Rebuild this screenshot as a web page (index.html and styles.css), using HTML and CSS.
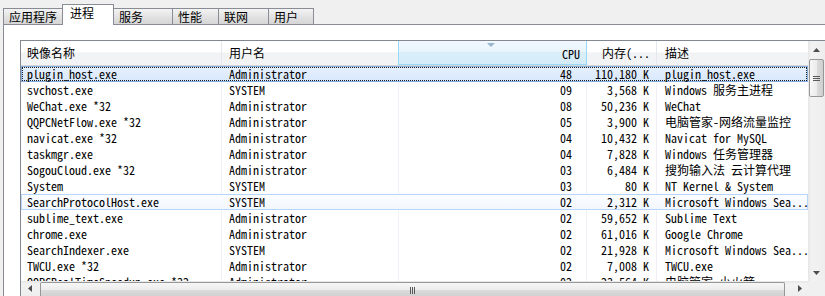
FILE: index.html
```html
<!DOCTYPE html>
<html lang="zh-CN">
<head>
    <meta charset="UTF-8">
    <title>Windows 任务管理器 - 进程</title>
    <link rel="stylesheet" href="styles.css">
</head>
<body>
    <div class="tabs">
        <div class="tab w1">应用程序</div>
        <div class="tab w2 active">进程</div>
        <div class="tab w3">服务</div>
        <div class="tab w4">性能</div>
        <div class="tab w5">联网</div>
        <div class="tab w6">用户</div>
    </div>
    <div class="panel">
        <div class="list">
            <div class="view">
                <div class="head">
                    <div class="hc c-name">映像名称</div>
                    <div class="hc c-user">用户名</div>
                    <div class="hc c-cpu sorted"><span class="sort"></span>CPU</div>
                    <div class="hc c-mem">内存(...</div>
                    <div class="hc c-desc">描述</div>
                </div>
                <div class="row selected"><span>plugin_host.exe</span><span>Administrator</span><span class="num">48</span><span class="mem">110,180 K</span><span>plugin_host.exe</span></div>
                <div class="row"><span>svchost.exe</span><span>SYSTEM</span><span class="num">09</span><span class="mem">3,568 K</span><span>Windows 服务主进程</span></div>
                <div class="row"><span>WeChat.exe *32</span><span>Administrator</span><span class="num">08</span><span class="mem">50,236 K</span><span>WeChat</span></div>
                <div class="row"><span>QQPCNetFlow.exe *32</span><span>Administrator</span><span class="num">05</span><span class="mem">3,900 K</span><span>电脑管家-网络流量监控</span></div>
                <div class="row"><span>navicat.exe *32</span><span>Administrator</span><span class="num">04</span><span class="mem">10,432 K</span><span>Navicat for MySQL</span></div>
                <div class="row"><span>taskmgr.exe</span><span>Administrator</span><span class="num">04</span><span class="mem">7,828 K</span><span>Windows 任务管理器</span></div>
                <div class="row"><span>SogouCloud.exe *32</span><span>Administrator</span><span class="num">03</span><span class="mem">6,484 K</span><span>搜狗输入法 云计算代理</span></div>
                <div class="row"><span>System</span><span>SYSTEM</span><span class="num">03</span><span class="mem">80 K</span><span>NT Kernel &amp; System</span></div>
                <div class="row hover"><span>SearchProtocolHost.exe</span><span>SYSTEM</span><span class="num">02</span><span class="mem">2,312 K</span><span>Microsoft Windows Sea...</span></div>
                <div class="row"><span>sublime_text.exe</span><span>Administrator</span><span class="num">02</span><span class="mem">59,652 K</span><span>Sublime Text</span></div>
                <div class="row"><span>chrome.exe</span><span>Administrator</span><span class="num">02</span><span class="mem">61,016 K</span><span>Google Chrome</span></div>
                <div class="row"><span>SearchIndexer.exe</span><span>SYSTEM</span><span class="num">02</span><span class="mem">21,928 K</span><span>Microsoft Windows Sea...</span></div>
                <div class="row"><span>TWCU.exe *32</span><span>Administrator</span><span class="num">02</span><span class="mem">7,008 K</span><span>TWCU.exe</span></div>
                <div class="row"><span>QQPCRealTimeSpeedup.exe *32</span><span>Administrator</span><span class="num">02</span><span class="mem">23,564 K</span><span>电脑管家-小火箭</span></div>
            </div>
            <div class="vscroll">
                <div class="sbtn"><svg width="7" height="4" viewBox="0 0 7 4"><path d="M0 4 L3.5 0 L7 4 Z" fill="#4d4d4d"/></svg></div>
                <div class="vtrack">
                    <div class="vthumb"><i></i><i></i><i></i></div>
                </div>
                <div class="sbtn"><svg width="7" height="4" viewBox="0 0 7 4"><path d="M0 0 L7 0 L3.5 4 Z" fill="#4d4d4d"/></svg></div>
            </div>
            <div class="hscroll">
                <div class="sbtn"><svg width="4" height="7" viewBox="0 0 4 7"><path d="M4 0 L4 7 L0 3.5 Z" fill="#4d4d4d"/></svg></div>
                <div class="htrack">
                    <div class="hthumb"><i></i><i></i><i></i></div>
                </div>
                <div class="sbtn"><svg width="4" height="7" viewBox="0 0 4 7"><path d="M0 0 L4 3.5 L0 7 Z" fill="#4d4d4d"/></svg></div>
            </div>
            <div class="corner"></div>
        </div>
    </div>
</body>
</html>
```

FILE: styles.css
```css
body {
    margin: 0;
    width: 825px;
    height: 296px;
    overflow: hidden;
    background-color: #f0f0f0;
    font-family: "Noto Sans Mono CJK SC", "Liberation Mono", "Noto Sans CJK SC", monospace;
    font-size: 12px;
    color: #000;
}
.tabs {
    display: flex;
    align-items: flex-end;
    height: 24px;
    padding-left: 3px;
}
.tab {
    box-sizing: border-box;
    height: 16px;
    line-height: 15px;
    padding-left: 5px;
    margin-right: -1px;
    border: 1px solid #898c95;
    border-bottom: none;
    background: linear-gradient(#f3f3f3, #e0e0e0 60%, #d6d6d6);
    white-space: nowrap;
}
.tab.active {
    position: relative;
    z-index: 1;
    height: 21px;
    line-height: 16px;
    margin-bottom: -1px;
    padding-left: 7px;
    background: #fff;
}
.w1 { width: 60px; }
.w2 { width: 52px; }
.w3 { width: 60px; }
.w4 { width: 47px; }
.w5 { width: 51px; }
.w6 { width: 46px; }
.panel {
    margin-left: 3px;
    border-top: 1px solid #898c95;
    border-left: 1px solid #898c95;
    background: #fff;
    padding: 15px 0 0 16px;
}
.list {
    display: grid;
    grid-template-columns: 787px 17px;
    grid-template-rows: 240px 15px;
    border-top: 1px solid #828790;
    border-left: 1px solid #828790;
}
.view {
    overflow: hidden;
}
.head, .row {
    display: grid;
    grid-template-columns: 201px 177px 188px 70px 151px;
}
.head {
    height: 25px;
    background: linear-gradient(#ffffff, #ffffff 45%, #f1f2f4 50%, #f3f4f6);
    border-bottom: 1px solid #d5d5d5;
    box-sizing: border-box;
}
.hc {
    box-sizing: border-box;
    line-height: 24px;
    padding-left: 6px;
    border-right: 1px solid #e3e8ee;
    white-space: nowrap;
    overflow: hidden;
}
.c-user { padding-left: 7px; }
.c-desc { padding-left: 8px; border-right: none; }
.c-cpu, .c-mem {
    text-align: right;
    padding-right: 6px;
}
.hc.sorted {
    position: relative;
    background: linear-gradient(#f2f9fd, #e9f5fc 45%, #d9eef9 50%, #d5ecf8);
    border-left: 1px solid #96d9f9;
    border-right: 1px solid #96d9f9;
    border-bottom: 1px solid #96d9f9;
    margin-left: -1px;
    line-height: 25px;
}
.sort {
    position: absolute;
    top: 2px;
    left: 88px;
    width: 0;
    height: 0;
    border-left: 4px solid transparent;
    border-right: 4px solid transparent;
    border-top: 4px solid #97b6cf;
}
.row {
    height: 16px;
    line-height: 16px;
    white-space: nowrap;
}
.row span {
    box-sizing: border-box;
    overflow: hidden;
    padding-left: 6px;
    border-right: 1px solid #eef2f7;
}
.row span:nth-child(2) { padding-left: 7px; }
.row span:nth-child(5) { padding-left: 8px; border-right: none; }
.row .num {
    text-align: right;
    padding-right: 14px;
}
.row .mem {
    text-align: right;
    padding-right: 7px;
}
.row.selected {
    background: linear-gradient(#e8f1fd, #d7e7fc);
    box-shadow: inset 0 0 0 1px #84acdd;
    outline: 1px dotted #1a1a1a;
    outline-offset: -2px;
}
.row.hover {
    background: linear-gradient(#fcfdff, #f2f7fe);
    box-shadow: inset 0 0 0 1px #b8d6fb;
}
.row.selected span, .row.hover span { border-right-color: transparent; }
.sbtn {
    width: 17px;
    height: 17px;
    flex: none;
    display: flex;
    align-items: center;
    justify-content: center;
}
.vscroll {
    display: flex;
    flex-direction: column;
    background: linear-gradient(90deg, #e6e6e6, #f2f2f2 20%, #eeeeee);
}
.vtrack {
    flex: 1;
    padding: 1px 1px 0 1px;
}
.vthumb {
    box-sizing: border-box;
    height: 38px;
    border: 1px solid #979797;
    border-radius: 2px;
    background: linear-gradient(90deg, #f7f7f7, #ececec 50%, #dcdcdc 51%, #cfcfcf);
    display: flex;
    flex-direction: column;
    align-items: center;
    justify-content: center;
    gap: 1px;
}
.vthumb i {
    width: 7px;
    height: 1px;
    background: #5a5a5a;
}
.hscroll {
    display: flex;
    align-items: flex-start;
    background: linear-gradient(#e6e6e6, #f2f2f2 20%, #eeeeee);
}
.hscroll .sbtn { height: 15px; }
.htrack {
    flex: 1;
    padding: 1px 0 0 2px;
}
.hthumb {
    box-sizing: border-box;
    height: 15px;
    width: 745px;
    border: 1px solid #979797;
    border-bottom: none;
    border-radius: 2px 2px 0 0;
    background: linear-gradient(#f7f7f7, #ececec 50%, #dcdcdc 51%, #cfcfcf);
    display: flex;
    align-items: center;
    justify-content: center;
    gap: 1px;
}
.hthumb i {
    width: 1px;
    height: 7px;
    background: #5a5a5a;
}
.corner {
    background: #f0f0f0;
}
```
